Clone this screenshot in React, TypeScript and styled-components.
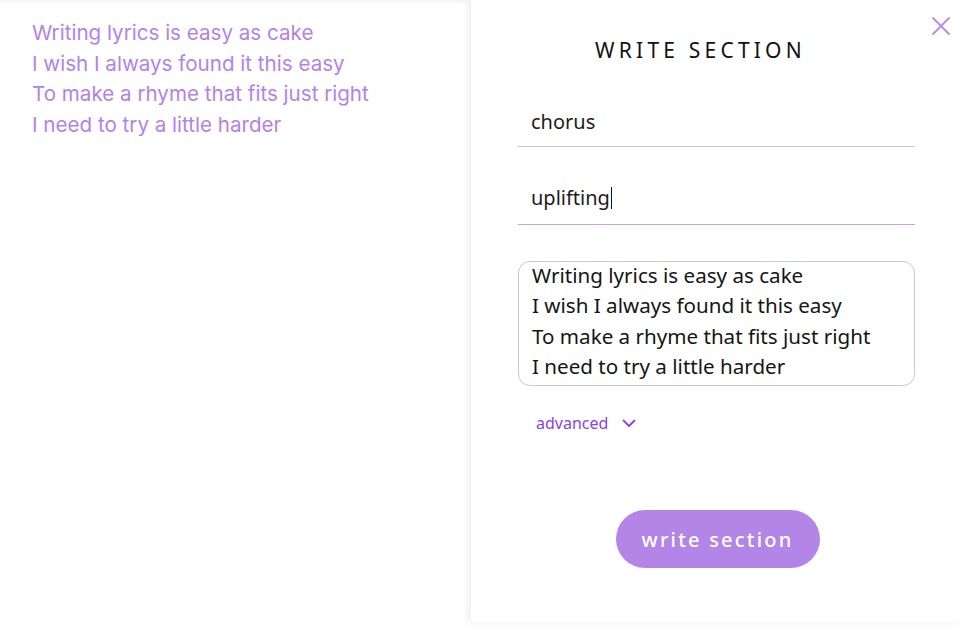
import React from "react";
import styled, { createGlobalStyle } from "styled-components";

const GlobalStyle = createGlobalStyle`
  html, body { margin: 0; padding: 0; background: #ffffff; }
  body { width: 962px; height: 630px; overflow: hidden; }
  * { box-sizing: border-box; }
`;

const Page = styled.div`
  display: flex;
  width: 962px;
  height: 630px;
  background: #ffffff;
`;

const LyricsPane = styled.div`
  width: 471px;
  height: 622px;
  flex-shrink: 0;
  padding: 18px 0 0 32px;
  box-shadow: inset 0 6px 6px -5px rgba(0, 0, 0, 0.07);
  font-family: Inter, "Liberation Sans", sans-serif;
`;

const LyricLine = styled.div`
  font-size: 20.6px;
  line-height: 30.5px;
  color: #b382e9;
`;

const Drawer = styled.aside`
  position: relative;
  z-index: 1;
  flex: 1;
  height: 622px;
  background: #ffffff;
  box-shadow: -3px 0 7px rgba(0, 0, 0, 0.07);
  display: flex;
  flex-direction: column;
  align-items: center;
  padding-top: 36px;
  font-family: "Noto Sans", "Liberation Sans", sans-serif;
`;

const CloseButton = styled.button`
  position: absolute;
  top: 16px;
  right: 11px;
  width: 20px;
  height: 20px;
  padding: 0;
  border: none;
  background: none;
  cursor: pointer;
  color: #b98ae8;
`;

const Title = styled.h1`
  margin: 0 0 0 -32px;
  font-size: 21px;
  font-weight: 400;
  letter-spacing: 4.2px;
  line-height: 28px;
  color: #111111;
`;

const Form = styled.div`
  width: 397px;
  display: flex;
  flex-direction: column;
`;

const Field = styled.div<{ $active?: boolean }>`
  height: 46px;
  margin-top: ${(p) => (p.$active ? "32px" : "37px")};
  border-bottom: 1.5px solid ${(p) => (p.$active ? "#c8a4f0" : "#c9c9c9")};
  padding: ${(p) => (p.$active ? "5px" : "7px")} 0 0 13px;
  font-size: 20px;
  line-height: 28px;
  color: #1c1c1c;
`;

const Caret = styled.span`
  display: inline-block;
  width: 1px;
  height: 22px;
  background: #111;
  vertical-align: -4px;
  margin-left: 1px;
`;

const TextArea = styled.div`
  margin-top: 36px;
  height: 125px;
  border: 1px solid #c9c9c9;
  border-radius: 12px;
  padding: 0 13px;
  overflow: hidden;
  font-size: 20.6px;
  line-height: 30.3px;
  color: #151515;
`;

const TextContent = styled.div`
  margin-top: -2px;
`;

const AdvancedToggle = styled.button`
  align-self: flex-start;
  margin: 26px 0 0 18px;
  padding: 0;
  border: none;
  background: none;
  display: flex;
  align-items: center;
  gap: 14px;
  font-family: inherit;
  font-size: 16px;
  color: #8a3ff0;
  cursor: pointer;
`;

const SubmitButton = styled.button`
  margin: 76px 0 0 2px;
  align-self: center;
  width: 204px;
  height: 58px;
  border: none;
  border-radius: 29px;
  background: #b385e6;
  color: #ffffff;
  font-family: inherit;
  font-size: 20px;
  font-weight: 500;
  letter-spacing: 2.2px;
  cursor: pointer;
`;

const lyrics = [
  "Writing lyrics is easy as cake",
  "I wish I always found it this easy",
  "To make a rhyme that fits just right",
  "I need to try a little harder",
];

export default function App() {
  return (
    <>
      <GlobalStyle />
      <Page>
        <LyricsPane>
          {lyrics.map((l) => (
            <LyricLine key={l}>{l}</LyricLine>
          ))}
        </LyricsPane>
        <Drawer>
          <CloseButton aria-label="close">
            <svg width="20" height="20" viewBox="0 0 20 20" fill="none" stroke="currentColor" strokeWidth="1.8" strokeLinecap="round">
              <path d="M2 2 L18 18 M18 2 L2 18" />
            </svg>
          </CloseButton>
          <Title>WRITE SECTION</Title>
          <Form>
            <Field>chorus</Field>
            <Field $active>
              uplifting
              <Caret />
            </Field>
            <TextArea>
              <TextContent>
                {lyrics.map((l) => (
                  <div key={l}>{l}</div>
                ))}
              </TextContent>
            </TextArea>
            <AdvancedToggle>
              advanced
              <svg width="14" height="9" viewBox="0 0 14 9" fill="none" stroke="currentColor" strokeWidth="1.8" strokeLinecap="round" strokeLinejoin="round">
                <path d="M1.5 1.5 L7 7 L12.5 1.5" />
              </svg>
            </AdvancedToggle>
            <SubmitButton>write section</SubmitButton>
          </Form>
        </Drawer>
      </Page>
    </>
  );
}
